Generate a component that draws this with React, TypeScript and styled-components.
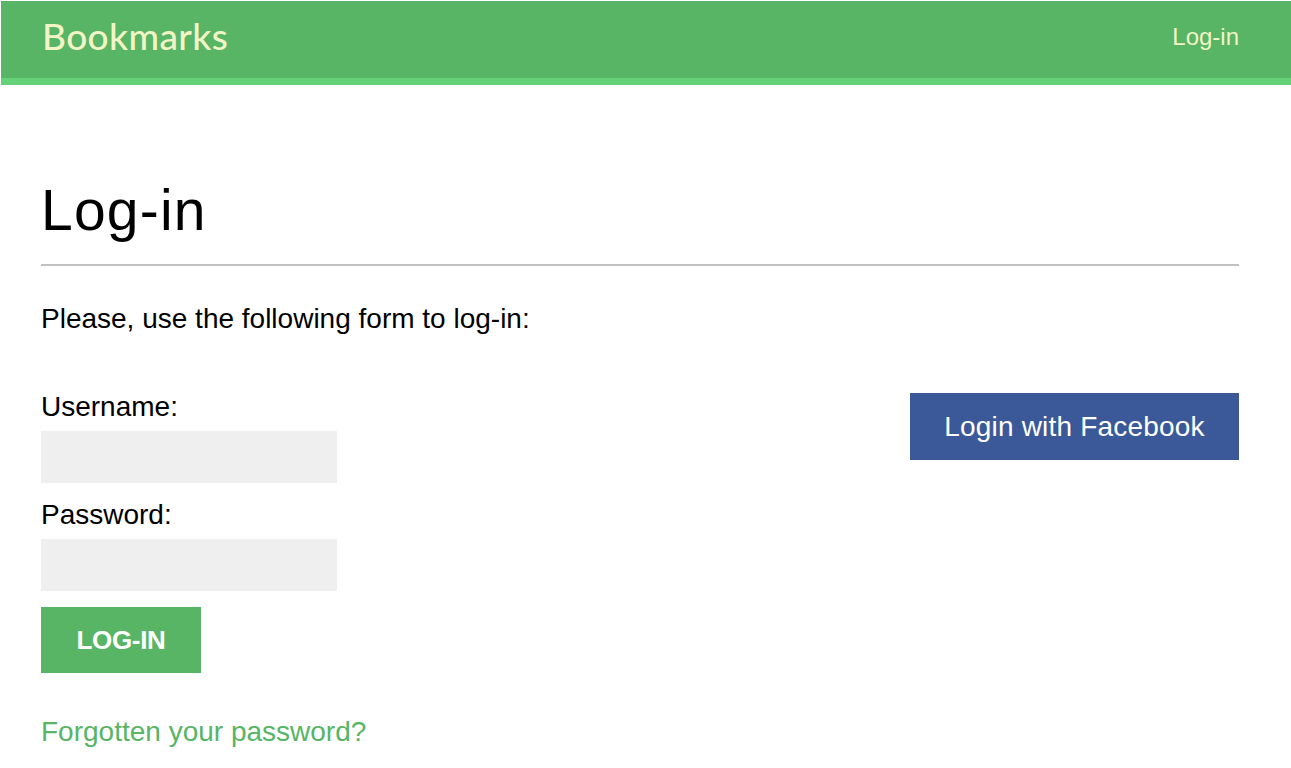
import React from "react";
import styled, { createGlobalStyle } from "styled-components";

const GlobalStyle = createGlobalStyle`
  html, body {
    margin: 0;
    padding: 0;
    background: #fff;
  }
  body {
    font-family: "Liberation Sans", Arial, Helvetica, sans-serif;
    color: #000;
  }
  * {
    box-sizing: border-box;
  }
`;

const Header = styled.header`
  margin: 1px 0 0 1px;
  height: 84px;
  background: #57b565;
  border-bottom: 7px solid #64d278;
  display: flex;
  align-items: center;
  justify-content: space-between;
  padding: 0 52px 0 41px;
`;

const Logo = styled.span`
  font-family: "Lato", "Noto Sans", sans-serif;
  font-size: 37px;
  font-weight: 500;
  letter-spacing: 0.4px;
  color: #f3f4c6;
  margin-top: -8px;
`;

const HeaderLink = styled.a`
  font-family: "Liberation Sans", Arial, sans-serif;
  font-size: 24px;
  color: #f3f4c6;
  text-decoration: none;
  margin-top: -6px;
`;

const Content = styled.main`
  padding: 0 52px 0 41px;
`;

const Title = styled.h1`
  margin: 97px 0 0;
  font-size: 57px;
  font-weight: 400;
  line-height: 57px;
  letter-spacing: 1.2px;
  padding-bottom: 25px;
  border-bottom: 2px solid #c0c0c0;
`;

const Intro = styled.p`
  margin: 37px 0 0;
  font-size: 28px;
  line-height: 32px;
`;

const Columns = styled.div`
  display: flex;
  justify-content: space-between;
  align-items: flex-start;
  margin-top: 56px;
`;

const Form = styled.form`
  display: flex;
  flex-direction: column;
  align-items: flex-start;
`;

const Label = styled.label`
  font-size: 28px;
  line-height: 32px;
  margin-bottom: 8px;
`;

const Input = styled.input`
  width: 296px;
  height: 52px;
  border: none;
  background: #efefef;
  margin-bottom: 16px;
  font-size: 22px;
  padding: 0 10px;
  outline: none;
`;

const SubmitButton = styled.button`
  width: 160px;
  height: 66px;
  border: none;
  background: #57b565;
  color: #fff;
  font-family: "Liberation Sans", Arial, sans-serif;
  font-size: 26px;
  font-weight: 700;
  text-transform: uppercase;
  letter-spacing: -0.3px;
  padding: 0;
  cursor: pointer;
`;

const ForgotLink = styled.a`
  margin-top: 43px;
  font-size: 28px;
  line-height: 32px;
  color: #57b565;
  text-decoration: none;
`;

const FacebookButton = styled.a`
  display: flex;
  align-items: center;
  justify-content: center;
  width: 329px;
  height: 67px;
  margin-top: 2px;
  background: #3b5998;
  color: #fff;
  font-size: 28px;
  text-decoration: none;
  letter-spacing: 0.2px;
`;

export default function App() {
  return (
    <>
      <GlobalStyle />
      <Header>
        <Logo>Bookmarks</Logo>
        <HeaderLink href="#">Log-in</HeaderLink>
      </Header>
      <Content>
        <Title>Log-in</Title>
        <Intro>Please, use the following form to log-in:</Intro>
        <Columns>
          <Form onSubmit={(e) => e.preventDefault()}>
            <Label htmlFor="username">Username:</Label>
            <Input id="username" type="text" />
            <Label htmlFor="password">Password:</Label>
            <Input id="password" type="password" />
            <SubmitButton type="submit">Log-in</SubmitButton>
            <ForgotLink href="#">Forgotten your password?</ForgotLink>
          </Form>
          <FacebookButton href="#">Login with Facebook</FacebookButton>
        </Columns>
      </Content>
    </>
  );
}
